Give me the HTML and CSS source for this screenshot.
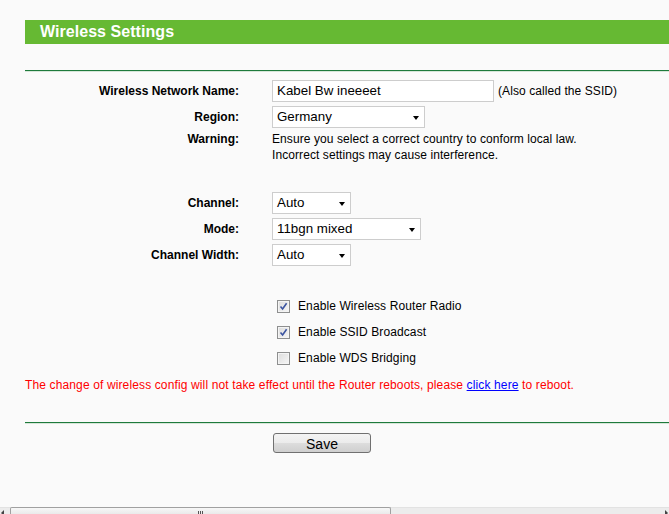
FILE: index.html
```html
<!DOCTYPE html>
<html>
<head>
<meta charset="utf-8">
<title>Wireless Settings</title>
<link rel="stylesheet" href="styles.css">
</head>
<body>
<div class="page">
  <div class="title-bar"><h1 class="title">Wireless Settings</h1></div>
  <div class="rule rule-top"></div>

  <div class="form">
    <div class="row">
      <div class="label">Wireless Network Name:</div>
      <div class="field">
        <span class="textbox w-name">Kabel Bw ineeeet</span>
        <span class="hint">(Also called the SSID)</span>
      </div>
    </div>
    <div class="row">
      <div class="label">Region:</div>
      <div class="field"><span class="select w-region">Germany<i class="caret"></i></span></div>
    </div>
    <div class="row row-warning">
      <div class="label">Warning:</div>
      <div class="field warning-text">Ensure you select a correct country to conform local law.<br>Incorrect settings may cause interference.</div>
    </div>

    <div class="row row-spaced">
      <div class="label">Channel:</div>
      <div class="field"><span class="select w-small">Auto<i class="caret"></i></span></div>
    </div>
    <div class="row">
      <div class="label">Mode:</div>
      <div class="field"><span class="select w-mode">11bgn mixed<i class="caret"></i></span></div>
    </div>
    <div class="row">
      <div class="label">Channel Width:</div>
      <div class="field"><span class="select w-small">Auto<i class="caret"></i></span></div>
    </div>

    <div class="row row-check-first">
      <div class="label"></div>
      <div class="field check">
        <span class="box"><svg viewBox="0 0 9 9" width="9" height="9"><path d="M1.5 4.5 L3.6 7 L7.6 1.3" fill="none" stroke="#3b54a0" stroke-width="1.6"/></svg></span>
        <span class="check-text">Enable Wireless Router Radio</span>
      </div>
    </div>
    <div class="row">
      <div class="label"></div>
      <div class="field check">
        <span class="box"><svg viewBox="0 0 9 9" width="9" height="9"><path d="M1.5 4.5 L3.6 7 L7.6 1.3" fill="none" stroke="#3b54a0" stroke-width="1.6"/></svg></span>
        <span class="check-text">Enable SSID Broadcast</span>
      </div>
    </div>
    <div class="row">
      <div class="label"></div>
      <div class="field check">
        <span class="box"></span>
        <span class="check-text">Enable WDS Bridging</span>
      </div>
    </div>
  </div>

  <p class="notice">The change of wireless config will not take effect until the Router reboots, please <a href="#" class="link">click here</a> to reboot.</p>

  <div class="rule rule-bottom"></div>

  <div class="actions">
    <span class="btn">Save</span>
  </div>
</div>

<div class="hscroll">
  <span class="arrow arrow-left"></span>
  <div class="thumb"><span class="grip"></span></div>
  <span class="arrow arrow-right"></span>
</div>
</body>
</html>
```

FILE: styles.css
```css
html, body {
  margin: 0;
  padding: 0;
  height: 100%;
  overflow: hidden;
}

body {
  background: #fafafa;
  font-family: "Liberation Sans", Arial, sans-serif;
  font-size: 12px;
  color: #000;
  display: flex;
  flex-direction: column;
}

.page {
  flex: 1;
  padding-left: 25px;
  padding-top: 20px;
}

.title-bar {
  background: #66b933;
  height: 24px;
  display: flex;
  align-items: center;
  padding-left: 15px;
}

.title {
  margin: 0;
  font-size: 16px;
  font-weight: bold;
  color: #fff;
  line-height: 24px;
  letter-spacing: 0.05px;
}

.rule {
  height: 1px;
  background: #1e7a3c;
  border-bottom: 1px solid #d6e6d8;
}

.rule-top {
  margin-top: 26px;
}

.form {
  margin-top: 6px;
}

.row {
  display: grid;
  grid-template-columns: 214px 1fr;
  column-gap: 33px;
  height: 26px;
  align-items: center;
}

.label {
  text-align: right;
  font-weight: bold;
  font-size: 12px;
}

.field {
  display: flex;
  align-items: center;
}

.textbox,
.select {
  box-sizing: border-box;
  height: 22px;
  border: 1px solid #cdcdcd;
  background: #fff;
  font-size: 13.33px;
  padding-left: 4px;
  padding-bottom: 1px;
  display: flex;
  align-items: center;
  position: relative;
}

.w-name { width: 222px; }
.w-region { width: 153px; }
.w-small { width: 79px; }
.w-mode { width: 149px; }

.hint {
  margin-left: 4px;
  font-size: 12px;
  letter-spacing: 0.08px;
}

.caret {
  position: absolute;
  right: 5px;
  top: 9px;
  width: 0;
  height: 0;
  border-left: 3.5px solid transparent;
  border-right: 3.5px solid transparent;
  border-top: 4px solid #000;
}

.row-warning {
  height: auto;
  align-items: start;
  margin-top: 1px;
  line-height: 16px;
}

.warning-text {
  display: block;
  font-size: 12px;
  letter-spacing: 0.08px;
}

.row-spaced {
  margin-top: 27px;
}

.row-check-first {
  margin-top: 25px;
}

.check {
  padding-left: 5px;
}

.box {
  box-sizing: border-box;
  width: 13px;
  height: 13px;
  border: 1px solid #8e8f8f;
  background: linear-gradient(135deg, #dcdcdc 0%, #f6f6f6 100%);
  display: inline-flex;
  align-items: center;
  justify-content: center;
  box-shadow: inset 0 0 0 1px #f4f4f4;
}

.check-text {
  margin-left: 8px;
  font-size: 12px;
  letter-spacing: 0.1px;
}

.notice {
  margin: 6px 0 0 0;
  line-height: 16px;
  color: #ff0000;
  font-size: 12px;
  letter-spacing: 0.13px;
}

.link {
  color: #0000ff;
  text-decoration: underline;
}

.rule-bottom {
  margin-top: 29px;
}

.actions {
  padding-left: 248px;
  margin-top: 9px;
}

.btn {
  box-sizing: border-box;
  display: inline-flex;
  align-items: center;
  justify-content: center;
  width: 98px;
  height: 20px;
  border: 1px solid #707070;
  border-radius: 3px;
  background: linear-gradient(#f4f4f4 0%, #ebebeb 50%, #dddddd 51%, #cfcfcf 100%);
  font-size: 14px;
  padding-top: 2px;
}

.hscroll {
  height: 6px;
  background: #ececec;
  border-top: 1px solid #e2e2e2;
  display: flex;
  align-items: flex-start;
  position: relative;
}

.thumb {
  margin-left: 10px;
  width: 381px;
  height: 8px;
  box-sizing: border-box;
  border: 1px solid #a0a0a0;
  border-bottom: none;
  border-radius: 2px 2px 0 0;
  background: linear-gradient(#f7f7f7, #e8e8e8);
  display: flex;
  justify-content: center;
  margin-top: -1px;
}

.grip {
  margin-top: 3px;
  width: 5px;
  height: 4px;
  background: repeating-linear-gradient(90deg, #555 0, #555 1px, transparent 1px, transparent 2px);
}

.arrow {
  position: absolute;
  top: 2px;
  width: 0;
  height: 0;
  border-top: 3px solid transparent;
  border-bottom: 3px solid transparent;
}

.arrow-left {
  left: 1px;
  border-right: 3px solid #444;
}

.arrow-right {
  right: 1px;
  border-left: 3px solid #444;
}
```
